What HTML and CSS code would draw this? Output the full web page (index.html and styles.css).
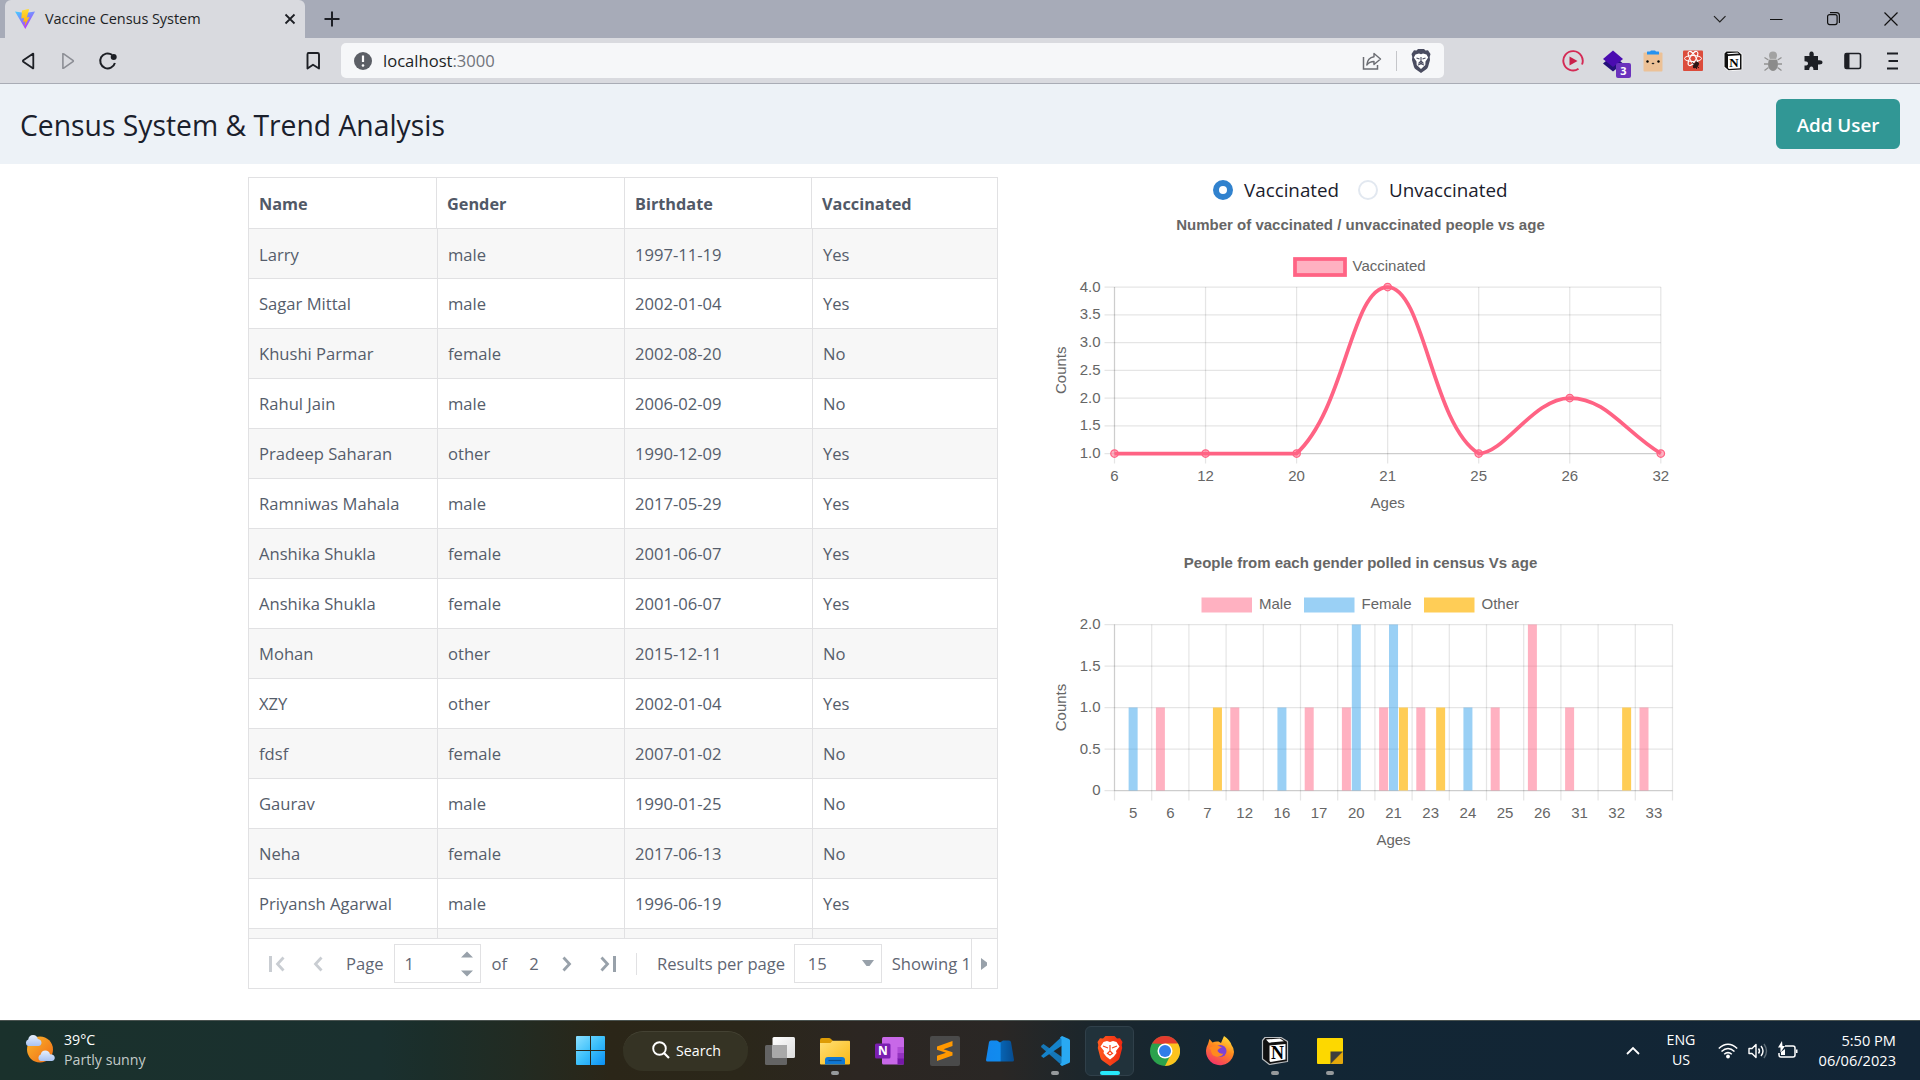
FILE: index.html
```html
<!DOCTYPE html>
<html lang="en">
<head>
<meta charset="utf-8">
<title>Vaccine Census System</title>
<link rel="stylesheet" href="styles.css">
</head>
<body>
<div class="screen">
  <div class="tabstrip">
    <div class="tab">
      <svg class="tab-logo" width="20" height="20" viewBox="0 0 20 20"><defs><linearGradient id="vite" x1="0" y1="0" x2=".6" y2="1"><stop offset="0" stop-color="#41d1ff"/><stop offset="1" stop-color="#bd34fe"/></linearGradient><linearGradient id="bolt" x1="0" y1="0" x2="0" y2="1"><stop offset="0" stop-color="#ffdd35"/><stop offset="1" stop-color="#ffa800"/></linearGradient></defs><path d="M0 2.500 10 4l10-1.500L10.300 20z" fill="url(#vite)"/><path d="M13.500 0 7 1.500l-.7 8 2.700-.6-.8 4 2.300-.7-1 5.300L14.500 8l-2.700.6L14 .8z" fill="url(#bolt)"/></svg>
      <span class="tab-title">Vaccine Census System</span>
      <svg class="tab-close" width="12" height="12" viewBox="0 0 12 12"><path d="M1.500 1.500l9 9M10.500 1.500l-9 9" stroke="#1d1f25" stroke-width="1.800"/></svg>
    </div>
    <svg class="new-tab" width="16" height="16" viewBox="0 0 16 16"><path d="M8 .5v15M.5 8h15" stroke="#1d1f25" stroke-width="2"/></svg>
    <div class="win-controls">
      <svg width="14" height="14" viewBox="0 0 14 14"><path d="M1 4.200 6.800 10 12.500 4.200" fill="none" stroke="#222" stroke-width="1.200"/></svg>
      <svg width="14" height="14" viewBox="0 0 14 14"><path d="M0 7.500h12.500" stroke="#111" stroke-width="1"/></svg>
      <svg width="14" height="14" viewBox="0 0 14 14"><rect x=".6" y="2.600" width="9.500" height="10" rx="2" fill="none" stroke="#111" stroke-width="1.200"/><path d="M3 .6h6.500q2.900 0 2.900 2.900V11" fill="none" stroke="#111" stroke-width="1.200"/></svg>
      <svg width="14" height="14" viewBox="0 0 14 14"><path d="M.5.5l13 13M13.500.5l-13 13" stroke="#111" stroke-width="1.200"/></svg>
    </div>
  </div>

  <div class="toolbar">
    <div class="nav">
      <svg width="20" height="20" viewBox="0 0 20 20"><path d="M15.300 3.500q.4-1.200-.8-.6L5.300 9.300q-.8.7 0 1.400l9.200 6.400q1.200.6.800-.6z" fill="none" stroke="#1d1f25" stroke-width="1.800" stroke-linejoin="round"/></svg>
      <svg width="20" height="20" viewBox="0 0 20 20"><path d="M4.900 3.500q-.4-1.200.8-.6l9.200 6.400q.8.7 0 1.400l-9.200 6.400q-1.200.6-.8-.6z" fill="none" stroke="#8c8e95" stroke-width="1.600" stroke-linejoin="round"/></svg>
      <svg width="20" height="20" viewBox="0 0 20 20"><path d="M14 3.800A7.500 7.500 0 1 0 16.900 12" fill="none" stroke="#1d1f25" stroke-width="2"/><circle cx="15.700" cy="6" r="3" fill="#1d1f25"/></svg>
    </div>
    <svg class="bookmark" width="20" height="20" viewBox="0 0 20 20"><path d="M5.500 2h9q1.500 0 1.500 1.500V17.500L10 13.800 4.500 17.500V3.500Q4.500 2 5.500 2z" fill="none" stroke="#1d1f25" stroke-width="1.900" stroke-linejoin="round"/></svg>
    <div class="url">
      <svg width="18" height="18" viewBox="0 0 18 18"><circle cx="9" cy="9" r="9" fill="#5c5f66"/><path d="M9 3.500v6.500" stroke="#fff" stroke-width="2.200"/><circle cx="9" cy="13.500" r="1.300" fill="#fff"/></svg>
      <span class="host">localhost<span class="port">:3000</span></span>
      <svg class="share" width="20" height="20" viewBox="0 0 20 20"><path d="M1.500 6v12h14v-4" fill="none" stroke="#6b6d73" stroke-width="1.500"/><path d="M12 2.500 18.500 8 12 13.500V10.500Q7.500 10.500 4.800 14 5.500 6.500 12 5.700z" fill="none" stroke="#6b6d73" stroke-width="1.400" stroke-linejoin="round"/></svg>
      <span class="url-sep"></span>
      <svg class="shield" width="20" height="24" viewBox="0 0 20 24"><path d="M5.500 1.500 7 0h6l1.500 1.500 2.500-.3L19.500 5l-.8 3 .3 3-2 7q-.6 1.600-2 2.600L10 24l-5-3.400Q3.600 19.600 3 18L1 11l.3-3L.5 5 3 1.200z" fill="#4a4c60"/><path d="M4.500 5.500 8 4.500l2 .8 2-.8 3.500 1 1.700 3-2.700 4-.2 3.500-4.300 4-4.300-4-.2-3.500-2.700-4z" fill="#fff"/><path d="M5.500 9l3 1M14.500 9l-3 1M10 8v4l-2 2h4l-2-2M7 16l3-1.200 3 1.200" stroke="#4a4c60" stroke-width="1.100" fill="none"/></svg>
    </div>
    <div class="extensions">
      <svg width="22" height="22" viewBox="0 0 22 22"><path d="M16.500 18.800A9.700 9.700 0 1 1 20 14.500" fill="none" stroke="#d42a55" stroke-width="1.900"/><path d="M7.500 6.500l8 4.500-8 4.500z" fill="#c9204b"/></svg>
      <div class="ext-badged"><svg width="22" height="22" viewBox="0 0 22 22"><path d="M1 13.500 11 5l10 8.500-10 8z" fill="#24107a"/><path d="M1 9 11 .5 21 9l-10 8z" fill="#4a0bb0"/></svg><span class="badge">3</span></div>
      <svg width="22" height="22" viewBox="0 0 22 22"><rect x="1.500" y="2.500" width="19" height="19" rx="1" fill="#ecc197"/><path d="M5 4.500V2q0-.5.5-.5H8L9 .5h4l1 1h2.500q.5 0 .5.500v2.500z" fill="#2492f0"/><circle cx="5.500" cy="11.500" r="1.200"/><circle cx="16.500" cy="11.500" r="1.200"/><path d="M9.800 13.500h2.400" stroke="#222" stroke-width="1.300"/></svg>
      <svg width="22" height="22" viewBox="0 0 22 22"><rect x="1" y=".5" width="20" height="20.500" rx="1" fill="#dc4b3b"/><g fill="none" stroke="#fff" stroke-width="1"><ellipse cx="11" cy="8.500" rx="8.500" ry="3"/><ellipse cx="11" cy="8.500" rx="8" ry="3" transform="rotate(60 11 8.500)"/><ellipse cx="11" cy="8.500" rx="8" ry="3" transform="rotate(120 11 8.500)"/></g><ellipse cx="14" cy="15" rx="2.300" ry="3.600" fill="#2a1414" transform="rotate(40 14 15)"/><path d="M10 12.500l7 5.500M11 18l6-5M14 11l.5 8" stroke="#2a1414" stroke-width="1"/></svg>
      <svg width="22" height="22" viewBox="0 0 22 22"><path d="M3.500 4 5.200 2.500h10.500l3 2.500v13.500l-12 .8-3.200-3z" fill="#fff" stroke="#fff" stroke-width="3.500" stroke-linejoin="round"/><path d="M2.500 3.500 4.500 1.500h11.500l3.500 3v15l-13 .8-4-3.600z" fill="#111"/><path d="M6 6l12-.7v12.900l-11 .7-1-.8zM4.800 3.300 15.500 2.600l1.500 1-10.800.7z" fill="#fff"/><text x="7.300" y="16.500" class="n-glyph">N</text></svg>
      <svg width="22" height="22" viewBox="0 0 22 22"><ellipse cx="11" cy="14" rx="5" ry="7" fill="#8b8b8b"/><circle cx="11" cy="5.500" r="4" fill="#a2a2a2"/><path d="M2.500 7.500l4 2.500M19.500 7.500l-4 2.500M2 14h4M20 14h-4M2.500 20.500l4-3M19.500 20.500l-4-3" stroke="#929292" stroke-width="1.300"/><path d="M6.500 9.300h9" stroke="#c9c9c9"/></svg>
      <svg width="22" height="22" viewBox="0 0 22 22"><path d="M2.500 6H7.500q-.8-4.500 2-4.500T11.700 6H16v4.300q4.500-.6 4.500 2T16 14.400V20h-4.600q.2-3.600-2-3.600T7.200 20H2.500v-4.500q3.500.2 3.500-2T2.500 11.200z" fill="#1d1f25"/></svg>
      <svg width="22" height="22" viewBox="0 0 22 22"><rect x="3" y="3.500" width="15.500" height="15" rx="1.500" fill="none" stroke="#1d1f25" stroke-width="1.600"/><path d="M3 3.500h4.500v15H3z" fill="#1d1f25"/></svg>
      <svg width="22" height="22" viewBox="0 0 22 22"><path d="M5 3.500h11M6.500 11h9.500M5 18.500h11" stroke="#1d1f25" stroke-width="2"/></svg>
    </div>
  </div>

  <header class="app-header">
    <h1>Census System &amp; Trend Analysis</h1>
    <button class="add-user">Add User</button>
  </header>

  <main class="content">
    <section class="grid">
      <div class="row head"><div>Name</div><div>Gender</div><div>Birthdate</div><div>Vaccinated</div></div>
      <div class="rows">
        <div class="row"><div>Larry</div><div>male</div><div>1997-11-19</div><div>Yes</div></div>
        <div class="row"><div>Sagar Mittal</div><div>male</div><div>2002-01-04</div><div>Yes</div></div>
        <div class="row"><div>Khushi Parmar</div><div>female</div><div>2002-08-20</div><div>No</div></div>
        <div class="row"><div>Rahul Jain</div><div>male</div><div>2006-02-09</div><div>No</div></div>
        <div class="row"><div>Pradeep Saharan</div><div>other</div><div>1990-12-09</div><div>Yes</div></div>
        <div class="row"><div>Ramniwas Mahala</div><div>male</div><div>2017-05-29</div><div>Yes</div></div>
        <div class="row"><div>Anshika Shukla</div><div>female</div><div>2001-06-07</div><div>Yes</div></div>
        <div class="row"><div>Anshika Shukla</div><div>female</div><div>2001-06-07</div><div>Yes</div></div>
        <div class="row"><div>Mohan</div><div>other</div><div>2015-12-11</div><div>No</div></div>
        <div class="row"><div>XZY</div><div>other</div><div>2002-01-04</div><div>Yes</div></div>
        <div class="row"><div>fdsf</div><div>female</div><div>2007-01-02</div><div>No</div></div>
        <div class="row"><div>Gaurav</div><div>male</div><div>1990-01-25</div><div>No</div></div>
        <div class="row"><div>Neha</div><div>female</div><div>2017-06-13</div><div>No</div></div>
        <div class="row"><div>Priyansh Agarwal</div><div>male</div><div>1996-06-19</div><div>Yes</div></div>
        <div class="row"><div></div><div></div><div></div><div></div></div>
      </div>
      <div class="pager">
        <div class="pager-track">
          <svg class="pg-first" width="16" height="16" viewBox="0 0 16 16"><path d="M1.500 0v16" stroke="#c9cdd2" stroke-width="3"/><path d="M14.500 1.500 8.500 8l6 6.500" fill="none" stroke="#c9cdd2" stroke-width="2.800"/></svg>
          <svg class="pg-prev" width="10" height="16" viewBox="0 0 10 16"><path d="M8.500 1.500 2.500 8l6 6.500" fill="none" stroke="#c9cdd2" stroke-width="2.800"/></svg>
          <span class="pg-label">Page</span>
          <div class="field"><span>1</span><svg width="12" height="26" viewBox="0 0 12 26"><path d="M0 6.500 6 .5l6 6zM0 19.500l6 6 6-6z" fill="#98a1aa"/></svg></div>
          <span class="pg-of">of</span>
          <span class="pg-total">2</span>
          <svg class="pg-next" width="10" height="16" viewBox="0 0 10 16"><path d="M1.500 1.500l6 6.500-6 6.500" fill="none" stroke="#98a1aa" stroke-width="2.800"/></svg>
          <svg class="pg-last" width="16" height="16" viewBox="0 0 16 16"><path d="M14.500 0v16" stroke="#98a1aa" stroke-width="3"/><path d="M1.500 1.500l6 6.500-6 6.500" fill="none" stroke="#98a1aa" stroke-width="2.800"/></svg>
          <span class="pg-sep"></span>
          <span class="pg-results">Results per page</span>
          <div class="field select"><span>15</span><svg width="12" height="7" viewBox="0 0 12 7"><path d="M0 0h12L7.500 6h-3z" fill="#98a1aa"/></svg></div>
          <span class="pg-showing">Showing 1</span>
        </div>
        <div class="pager-more"><svg width="7" height="12" viewBox="0 0 7 12"><path d="M0 0v12l6-4.500v-3z" fill="#98a1aa"/></svg></div>
      </div>
    </section>

    <section class="charts">
      <div class="radios">
        <span class="radio on"></span><span class="r-vac">Vaccinated</span>
        <span class="radio"></span><span class="r-unvac">Unvaccinated</span>
      </div>
      <svg id="line-chart" class="chart" width="640" height="330" viewBox="1040 205 640 330"></svg>
      <svg id="bar-chart" class="chart" width="640" height="330" viewBox="1040 535 640 330"></svg>
    </section>
  </main>

  <footer class="taskbar">
    <svg class="weather" width="32" height="30" viewBox="0 0 32 30"><defs><linearGradient id="sun" x1="0" y1="0" x2="1" y2="1"><stop offset="0" stop-color="#fbb72c"/><stop offset="1" stop-color="#ef6a15"/></linearGradient><linearGradient id="cloud" x1="0" y1="0" x2="0" y2="1"><stop offset="0" stop-color="#e6effc"/><stop offset="1" stop-color="#a9c3f2"/></linearGradient></defs><circle cx="16" cy="15.500" r="13" fill="url(#sun)"/><path d="M4 12a3.500 3.500 0 0 1 .2-6.500Q5 1 9 1t4.800 4Q17.500 5.500 17.500 9q-.5 3-3 3z" fill="url(#cloud)"/><path d="M16.500 27a3.500 3.500 0 0 1 .2-6.500q.8-4 4.600-4t4.700 3.700Q30.800 20.500 30.800 24q-.5 3-3 3z" fill="url(#cloud)"/></svg>
    <div class="weather-text"><span>39°C</span><span class="dim">Partly sunny</span></div>
    <svg class="start" width="30" height="30" viewBox="0 0 30 30"><defs><linearGradient id="win" x1="0" y1="0" x2="1" y2="1"><stop offset="0" stop-color="#8ce0ff"/><stop offset=".5" stop-color="#3cc0fb"/><stop offset="1" stop-color="#0a90f5"/></linearGradient></defs><path d="M1 0H14v14H0V1q0-1 1-1zM15 0H28q1 0 1 1v13h-14zM0 15H14v14H1q-1 0-1-1zM15 15h14v13q0 1-1 1h-13z" fill="url(#win)"/></svg>
    <div class="search"><svg width="18" height="18" viewBox="0 0 18 18"><circle cx="7.500" cy="7.500" r="6.300" fill="none" stroke="#fff" stroke-width="1.900"/><path d="M12 12l5 5" stroke="#fff" stroke-width="2.200"/></svg><span>Search</span></div>
    <div class="apps">
      <div class="app"><svg width="30" height="30" viewBox="0 0 30 30"><rect x="0" y="9" width="22" height="20" rx="1.500" fill="#646464"/><defs><linearGradient id="tv" x1="0" y1="0" x2="1" y2="1"><stop offset="0" stop-color="#fff"/><stop offset="1" stop-color="#dcdcdc"/></linearGradient></defs><rect x="7.500" y="1" width="22.500" height="21" rx="1.500" fill="url(#tv)"/><path d="M7.500 9H22v13H7.500z" fill="#a9a9a9"/></svg></div>
      <div class="app open"><svg width="30" height="30" viewBox="0 0 30 30"><defs><linearGradient id="fold" x1="0" y1="0" x2="1" y2="1"><stop offset="0" stop-color="#ffdf76"/><stop offset="1" stop-color="#fbb914"/></linearGradient></defs><path d="M0 4q0-2 2-2h7q1 0 2 1l2 2v5H0z" fill="#dd9c06"/><path d="M0 7h10.500l2-2.200H29q1 0 1 1V27.500q0 1-1 1H1q-1 0-1-1z" fill="url(#fold)"/><path d="M5 28.500V24q0-3 3-3h14q3 0 3 3v4.500z" fill="#0f78d4"/><path d="M8.500 24.500h13" stroke="#0a4d8c" stroke-width="1.200"/></svg></div>
      <div class="app"><svg width="30" height="30" viewBox="0 0 30 30"><rect x="7" y="1" width="22" height="27.500" rx="1.500" fill="#c868e8"/><path d="M22.500 11H29v6h-6.500z" fill="#ae4bd5"/><path d="M22.500 17H29v6h-6.500z" fill="#9332bf"/><path d="M22.500 22.500H29v6h-6.500z" fill="#7719aa"/><rect x="0" y="7.500" width="15.500" height="15" rx="1.500" fill="#7a1fb0"/><text x="3" y="19" class="on-glyph">N</text></svg></div>
      <div class="app"><svg width="30" height="30" viewBox="0 0 30 30"><rect width="30" height="30" rx="2" fill="#4a4a4a"/><path d="M7 10.500 22.500 5v5l-9 3.200 9 3v3.300L7 25v-5.200l9-3.100-9-3z" fill="#ff9800"/></svg></div>
      <div class="app"><svg width="30" height="30" viewBox="0 0 30 30"><defs><linearGradient id="az" x1="0" y1="0" x2="1" y2="0"><stop offset="0" stop-color="#1287ee"/><stop offset=".5" stop-color="#118bee"/><stop offset=".55" stop-color="#0763b2"/><stop offset="1" stop-color="#074b8e"/></linearGradient></defs><path d="M6 4.500h6l3 2 3-2h6q1.500 0 2 1.500l3 18q0 1.500-1.500 1.500H2.500Q1 25.500 1 24L4 6q.5-1.500 2-1.500z" fill="url(#az)"/></svg></div>
      <div class="app open"><svg width="30" height="30" viewBox="0 0 30 30"><path d="M1.500 9.500l2-1.500L29 26l-7 3.500L1 11z" fill="#1577b8"/><path d="M1 20l2.500 2 26-17.500L22 .5z" fill="#1583cb"/><path d="M22 0l7 3q1 .5 1 1.500v21q0 1-1 1.500l-7 3-2-1.500 1.500-1.500V3L20 1.500z" fill="#29a9f2"/></svg></div>
      <div class="app active"><svg width="30" height="30" viewBox="0 0 30 30"><defs><linearGradient id="brv" x1="0" y1="0" x2="1" y2="0"><stop offset="0" stop-color="#ff5a1f"/><stop offset="1" stop-color="#f02a12"/></linearGradient></defs><path d="M8 2.500 10.500 0h9L22 2.500l3-.2L27.500 6l-.8 3 .5 3-2.500 9.500q-.5 2-2 3L15 30l-7.700-5.500q-1.500-1-2-3L2.800 12l.5-3-.8-3L5 2.300z" fill="url(#brv)"/><path d="M8.500 6 12 5l3 1 3-1 3.500 1 3 4.500-3.500 4.500.5 2-2.700 3.500L15 23.500l-3.800-3L8.500 17l.5-2-3.500-4.500z" fill="#fff"/><path d="M8 10l5 2M22 10l-5 2M15 9v6l-2.500 2.500L15 19l2.500-1.500L15 15" stroke="#f9441b" stroke-width="1.200" fill="none"/></svg></div>
      <div class="app"><svg width="30" height="30" viewBox="0 0 30 30"><circle cx="15" cy="15" r="15" fill="#2ba24c"/><path d="M15 15 2 7.500A15 15 0 0 1 28 7.500z" fill="#e33b2e"/><path d="M28 7.500A15 15 0 0 1 15 30L21 18 15 7.500z" fill="#fcc31e"/><path d="M2 7.500 8.500 18.500 15 8z" fill="#2ba24c"/><circle cx="15" cy="15" r="7.500" fill="#fff"/><circle cx="15" cy="15" r="6" fill="#2f7de9"/></svg></div>
      <div class="app"><svg width="30" height="30" viewBox="0 0 30 30"><defs><linearGradient id="fx" x1=".8" y1="0" x2=".3" y2="1"><stop offset="0" stop-color="#ffe23c"/><stop offset=".45" stop-color="#ff8a1e"/><stop offset="1" stop-color="#f5316a"/></linearGradient></defs><path d="M3 8l1.500-5 3 3.500q3-1.500 6-1L16 7l3-7q6 4 7.500 9 2.500 3 2.500 7A14 14 0 1 1 3 8z" fill="url(#fx)"/><circle cx="15.500" cy="15" r="6" fill="#7c42d8"/><path d="M4 12q5-3 10-2l3 1.500q-4 1-4.500 3.500 2 3.500 6 2.500-2.500 4-7.500 3T6 14z" fill="#ff8a1e"/></svg></div>
      <div class="app open"><svg width="30" height="30" viewBox="0 0 30 30"><path d="M2.500 4.500 5 1.500h16l6.500 4v20l-18 3-7-5.500z" fill="#111" stroke="#b9bcbf" stroke-width="1.200" stroke-linejoin="round"/><path d="M9.500 9.500 25.500 8v15.500L10.500 26l-1-1zM6 3.500 20 2.600l4 2.600L9 6.700z" fill="#fff"/><text x="11" y="22.500" class="n-big">N</text></svg></div>
      <div class="app open"><svg width="30" height="30" viewBox="0 0 30 30"><path d="M3 2h24q1 0 1 1v12.500L15.500 28H3q-1 0-1-1V3q0-1 1-1z" fill="#fdd800"/><path d="M15.500 28V15.500H28z" fill="#3d3d3d"/><path d="M15.500 28 28 15.500V27q0 1-1 1z" fill="#e3a80c"/></svg></div>
    </div>
    <div class="tray">
      <svg class="tray-up" width="14" height="10" viewBox="0 0 14 10"><path d="M1 8l6-6 6 6" fill="none" stroke="#fff" stroke-width="1.800"/></svg>
      <div class="lang"><span>ENG</span><span>US</span></div>
      <svg class="wifi" width="20" height="16" viewBox="0 0 20 16"><g fill="none" stroke="#fff" stroke-width="1.500"><path d="M.8 5.500q9.200-8.500 18.400 0M3.500 8.500q6.500-6 13 0M6.200 11.300q3.800-3.400 7.600 0"/></g><circle cx="10" cy="13.500" r="1.900" fill="#fff"/></svg>
      <svg class="vol" width="20" height="16" viewBox="0 0 20 16"><path d="M1 5.500h3l4-4v13l-4-4H1z" fill="none" stroke="#fff" stroke-width="1.400" stroke-linejoin="round"/><path d="M10.500 5.500q2 2.500 0 5M13 3q4 5 0 10" fill="none" stroke="#fff" stroke-width="1.400"/><path d="M16 1q5 7 0 14" fill="none" stroke="#5d6c76" stroke-width="1.400"/></svg>
      <svg class="bat" width="21" height="18" viewBox="0 0 21 18"><path d="M7 5h8q2 0 2 2v7q0 2-2 2H3q-2 0-2-2v-2" fill="none" stroke="#fff" stroke-width="1.500"/><path d="M18 8.500h1.500V12H18z" fill="#fff"/><path d="M4 0 0 6.500h2.500v5L7 5H4.500zM3 14V11l4-3v6z" fill="#fff"/></svg>
      <div class="clock"><span>5:50 PM</span><span>06/06/2023</span></div>
    </div>
  </footer>
</div>
<script src="charts.js"></script>
</body>
</html>
```

FILE: styles.css
```css
* { box-sizing: border-box; }
body { margin: 0; background: #fff; font-family: "Open Sans", "Noto Sans", sans-serif; }
svg { display: block; flex: none; }
.screen { width: 1920px; height: 1080px; display: flex; flex-direction: column; overflow: hidden; white-space: nowrap; }

/* browser tab strip */
.tabstrip { height: 38px; flex: none; background: #a7abb8; display: flex; align-items: center; padding-left: 5px; }
.tab { width: 300px; height: 38px; background: #d9dadf; border-radius: 6px 6px 0 0; display: flex; align-items: center; padding: 0 9px 0 10px; }
.tab-title { margin: -2px 0 0 10px; font-size: 14.500px; letter-spacing: -0.05px; color: #1d1f25; }
.tab-close { margin-left: auto; }
.new-tab { margin-left: 19px; }
.win-controls { margin-left: auto; display: flex; gap: 43px; padding-right: 22px; }

/* browser toolbar */
.toolbar { height: 46px; flex: none; background: #d9dadf; border-bottom: 1px solid #a9acb5; display: flex; align-items: center; padding-left: 18px; }
.nav { display: flex; gap: 20px; width: 285px; }
.url { width: 1103px; height: 35px; margin-left: 18px; background: #f6f7f9; border-radius: 5px; display: flex; align-items: center; padding: 0 13px 0 13px; }
.host { margin-left: 11px; font-size: 16.600px; color: #1d1f25; }
.port { color: #71747b; }
.share { margin-left: auto; }
.url-sep { width: 1px; height: 20px; background: #c5c6ca; margin: 0 14px; }
.extensions { display: flex; gap: 18px; margin-left: auto; padding-right: 16px; }
.ext-badged { position: relative; }
.badge { position: absolute; left: 14px; top: 13px; width: 15px; height: 15px; border-radius: 2px; background: #6b32bd; color: #fff; font-size: 11px; font-weight: 700; line-height: 15px; text-align: center; }
.n-glyph { font: 700 13px "Liberation Serif", serif; }
.n-big { font: 700 18px "Liberation Serif", serif; }
.on-glyph { font: 700 12px "Open Sans", sans-serif; fill: #fff; }

/* application header */
.app-header { height: 80px; flex: none; background: #edf2f7; display: flex; align-items: center; justify-content: space-between; padding: 0 20px; }
.app-header h1 { margin: 2px 0 0; font-size: 28.300px; font-weight: 400; color: #1a202c; line-height: 40px; }
.add-user { width: 124px; height: 50px; border: 0; border-radius: 6px; background: #319795; color: #fff; font: 600 18.800px "Open Sans", sans-serif; padding: 2px 0 0; }

.content { height: 856px; flex: none; display: flex; padding: 13px 0 0 248px; }

/* data grid */
.grid { width: 750px; height: 812px; border: 1px solid #e1e1e3; color: #555d6b; font-size: 16.600px; }
.row { display: grid; grid-template-columns: 189px 187px 188px 184px; height: 50px; }
.row > div { border-bottom: 1px solid #e1e1e3; border-right: 1px solid #e1e1e3; padding: 1px 0 0 10px; line-height: 48px; }
.row > div:last-child { border-right: 0; }
.row.head { grid-template-columns: 188px 188px 187px 185px; height: 51px; font-weight: 700; font-size: 16.300px; color: #515967; }
.row.head > div { padding-top: 2px; line-height: 48px; }
.rows { height: 709px; overflow: hidden; }
.rows .row:nth-child(odd) { background: #f7f7f7; }
.rows .row:first-child > div { padding-top: 3px; line-height: 46px; }
.pager { height: 50px; border-top: 1px solid #e1e1e3; display: flex; }
.pager-track { width: 722px; overflow: hidden; display: flex; align-items: center; padding-left: 20px; color: #5f6673; }
.pager-more { flex: 1; border-left: 1px solid #e1e1e3; display: flex; align-items: center; padding-left: 9px; }
.pg-prev { margin-left: 28px; }
.pg-label { margin-left: 23px; width: 48px; }
.field { width: 87px; height: 39px; border: 1px solid #e1e1e3; display: flex; align-items: center; justify-content: space-between; padding: 0 7px 0 10px; flex: none; }
.pg-of { margin-left: 11px; width: 38px; }
.pg-total { width: 33px; }
.pg-last { margin-left: 28px; }
.pg-sep { width: 1px; height: 22px; background: #e1e1e3; margin-left: 20px; }
.pg-results { margin-left: 20px; width: 138px; }
.field.select { width: 88px; padding-left: 13px; }
.pg-showing { margin-left: 10px; }

/* charts */
.charts { width: 640px; margin-left: 42px; }
.radios { height: 28px; display: flex; align-items: center; padding: 0 0 2px 173px; font-size: 18.800px; color: #1a202c; }
.radio { width: 20px; height: 20px; border-radius: 50%; border: 2px solid #e2e8f0; flex: none; margin-top: -1px; }
.radio.on { border: 6px solid #3182ce; }
.r-vac { width: 104px; margin: 0 10px 0 11px; }
.r-unvac { margin-left: 11px; }
.chart text { font-family: "Liberation Sans", Arial, sans-serif; font-size: 15px; fill: #666; }
.chart .title { font-weight: 700; }
.chart .gridline { stroke: #000; stroke-opacity: .1; stroke-width: 1.250; }

/* taskbar */
.taskbar { height: 60px; flex: none; display: flex; align-items: center; color: #fff; border-top: 1px solid #4a5350; font-size: 14.200px;
  background: linear-gradient(90deg, #1a312c 0, #1a302f 380px, #1b2e2a 430px, #222b22 520px, #2b2618 610px, #2b271a 740px, #2c2622 860px, #2a2725 1000px, #1b262c 1090px, #122634 1240px, #122536 100%); }
.weather { margin-left: 24px; margin-top: -4px; }
.weather-text { display: flex; flex-direction: column; line-height: 20px; margin: -2px 0 0 8px; width: 512px; }
.dim { color: #c3cbc9; }
.search { width: 125px; height: 40px; margin-left: 17px; border-radius: 20px; background: #353324; border-top: 1px solid #444233; display: flex; align-items: center; padding-left: 29px; padding-bottom: 2px; gap: 6px; }
.apps { display: flex; margin-left: 7px; }
.app { width: 49px; height: 50px; margin-right: 6px; border-radius: 6px; display: flex; flex-direction: column; align-items: center; padding-top: 10px; }
.app.open::after { content: ""; width: 8px; height: 4px; border-radius: 2px; background: #969a9c; margin-top: 5px; }
.app.active { background: #21323b; border: 1px solid #30404a; padding-top: 9px; }
.app.active::after { content: ""; width: 20px; height: 4px; border-radius: 2px; background: #27e9fb; margin-top: 5px; }
.tray { margin-left: auto; display: flex; align-items: center; padding-right: 24px; }
.lang { display: flex; flex-direction: column; align-items: center; line-height: 20px; width: 40px; margin: -1px 0 0 21px; }
.wifi { margin-left: 17px; }
.vol { margin-left: 10px; }
.bat { margin: -2px 0 0 10px; }
.clock { display: flex; flex-direction: column; align-items: flex-end; line-height: 20px; width: 97px; font-size: 14.600px; margin-top: -2px; }
```

FILE: charts.js
```js
const NS = 'http://www.w3.org/2000/svg';

function add(svg, tag, attrs, text) {
  const el = document.createElementNS(NS, tag);
  for (const key in attrs) el.setAttribute(key, attrs[key]);
  if (text !== undefined) el.textContent = text;
  svg.appendChild(el);
  return el;
}
const line = (svg, x1, y1, x2, y2) => add(svg, 'line', { x1, y1, x2, y2, class: 'gridline' });
const label = (svg, x, y, text, anchor = 'middle', extra = {}) =>
  add(svg, 'text', { x, y, 'text-anchor': anchor, ...extra }, text);

// Axes, grid and titles shared by both charts
function frame(svg, o) {
  label(svg, 1360.5, o.titleY, o.title, 'middle', { class: 'title' });
  o.yLabels.forEach((t, i) => {
    const y = o.top + (o.bottom - o.top) * i / (o.yLabels.length - 1);
    line(svg, 1104.5, y, o.right, y);
    label(svg, 1100.5, y + 4.5, t, 'end');
  });
  for (let i = 0; i <= o.cells; i++) {
    const x = 1114.5 + (o.right - 1114.5) * i / o.cells;
    line(svg, x, o.top, x, o.bottom + 10);
  }
  line(svg, 1114.5, o.top, 1114.5, o.bottom);
  line(svg, 1114.5, o.bottom, o.right, o.bottom);
  const mid = (o.top + o.bottom) / 2;
  label(svg, (1114.5 + o.right) / 2, o.bottom + 54.5, 'Ages');
  label(svg, 0, 0, 'Counts', 'middle', { transform: `translate(1066 ${mid}) rotate(-90)` });
}

// Line chart
const lc = document.getElementById('line-chart');
frame(lc, { title: 'Number of vaccinated / unvaccinated people vs age', titleY: 229.5, top: 287, bottom: 453.5, right: 1660.8, cells: 6,
  yLabels: ['4.0', '3.5', '3.0', '2.5', '2.0', '1.5', '1.0'] });
add(lc, 'rect', { x: 1295, y: 259, width: 50, height: 16, fill: '#ffb1c1', stroke: '#ff6384', 'stroke-width': 3.75 });
label(lc, 1352.5, 271, 'Vaccinated', 'start');
add(lc, 'path', { d: 'M1114.5 453.5H1296.5C1345.7 408.5 1351.2 287 1387.6 287S1432.1 425.2 1478.7 453.5C1504.9 453.5 1533.4 398 1569.8 398S1624.4 431.4 1660.8 453.5',
  fill: 'none', stroke: '#ff6384', 'stroke-width': 3.75 });
[[6, 1], [12, 1], [20, 1], [21, 4], [25, 1], [26, 2], [32, 1]].forEach(([age, n], i) => {
  const x = 1114.5 + 91.05 * i;
  add(lc, 'circle', { cx: x, cy: 453.5 - (n - 1) * 55.5, r: 3.75, fill: '#ff6384', 'fill-opacity': .5, stroke: '#ff6384', 'stroke-width': 1.25 });
  label(lc, x, 480.5, age);
});

// Grouped bar chart
const bc = document.getElementById('bar-chart');
frame(bc, { title: 'People from each gender polled in census Vs age', titleY: 567.5, top: 624.5, bottom: 790.5, right: 1672.5, cells: 15,
  yLabels: ['2.0', '1.5', '1.0', '0.5', '0'] });
const colors = ['rgba(255,99,132,.5)', 'rgba(53,162,235,.5)', '#ffcd56'];
[['Male', 1201.5, 1259], ['Female', 1304, 1361.5], ['Other', 1424, 1481.5]].forEach(([name, boxX, textX], i) => {
  add(bc, 'rect', { x: boxX, y: 597.5, width: 50.5, height: 15, fill: colors[i] });
  label(bc, textX, 609, name, 'start');
});
const data = [[5, 0, 1, 0], [6, 1, 0, 0], [7, 0, 0, 1], [12, 1, 0, 0], [16, 0, 1, 0], [17, 1, 0, 0], [20, 1, 2, 0], [21, 1, 2, 1],
  [23, 1, 0, 1], [24, 0, 1, 0], [25, 1, 0, 0], [26, 2, 0, 0], [31, 1, 0, 0], [32, 0, 0, 1], [33, 1, 0, 0]];
data.forEach(([age, ...counts], i) => {
  const x = 1114.5 + 37.2 * i;
  counts.forEach((n, s) => {
    if (n) add(bc, 'rect', { x: x + 4.2 + 9.92 * s, y: 790.5 - 83 * n, width: 9, height: 83 * n, fill: colors[s] });
  });
  label(bc, x + 18.6, 818, age);
});
```
